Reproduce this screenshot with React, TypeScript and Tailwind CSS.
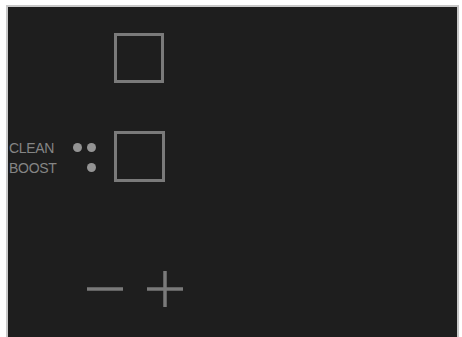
export default function App() {
  return (
    <div className="h-[337px] w-[462px] overflow-hidden bg-white pl-[6px] pr-[3px] pt-[5px]">
      <div
        className="flex h-[340px] flex-col border-x-2 border-t-2 border-[#c8c8c8] bg-[#1e1e1e] pt-[26px]"
        style={{ fontFamily: '"Liberation Sans", Arial, sans-serif' }}
      >
        {/* top cooking zone */}
        <div className="pl-[106px]">
          <div className="h-[50px] w-[50px] border-[3px] border-[#7a7a7a]" />
        </div>

        {/* clean / boost + second zone */}
        <div className="mt-[48px] flex items-center">
          <div className="flex w-[106px] flex-col gap-[6px] pl-[1px] pt-[2px]">
            <div className="flex items-center">
              <span className="w-[64px] text-[14px] leading-[14px] tracking-[-0.3px] text-[#858585]">CLEAN</span>
              <span className="h-[9px] w-[9px] rounded-full bg-[#949494]" />
              <span className="ml-[5px] h-[9px] w-[9px] rounded-full bg-[#949494]" />
            </div>
            <div className="flex items-center">
              <span className="w-[78px] text-[14px] leading-[14px] tracking-[-0.3px] text-[#858585]">BOOST</span>
              <span className="h-[9px] w-[9px] rounded-full bg-[#949494]" />
            </div>
          </div>
          <div className="h-[51px] w-[51px] border-[3px] border-[#7a7a7a]" />
        </div>

        {/* minus / plus */}
        <div className="mt-[89px] flex items-center gap-[24px] pl-[79px]">
          <svg width="36" height="36" viewBox="0 0 36 36">
            <path d="M0 18H36" stroke="#7a7a7a" strokeWidth="3.5" />
          </svg>
          <svg width="36" height="36" viewBox="0 0 36 36">
            <path d="M0 18H36M18 0V36" stroke="#7a7a7a" strokeWidth="3.5" />
          </svg>
        </div>
      </div>
    </div>
  );
}
